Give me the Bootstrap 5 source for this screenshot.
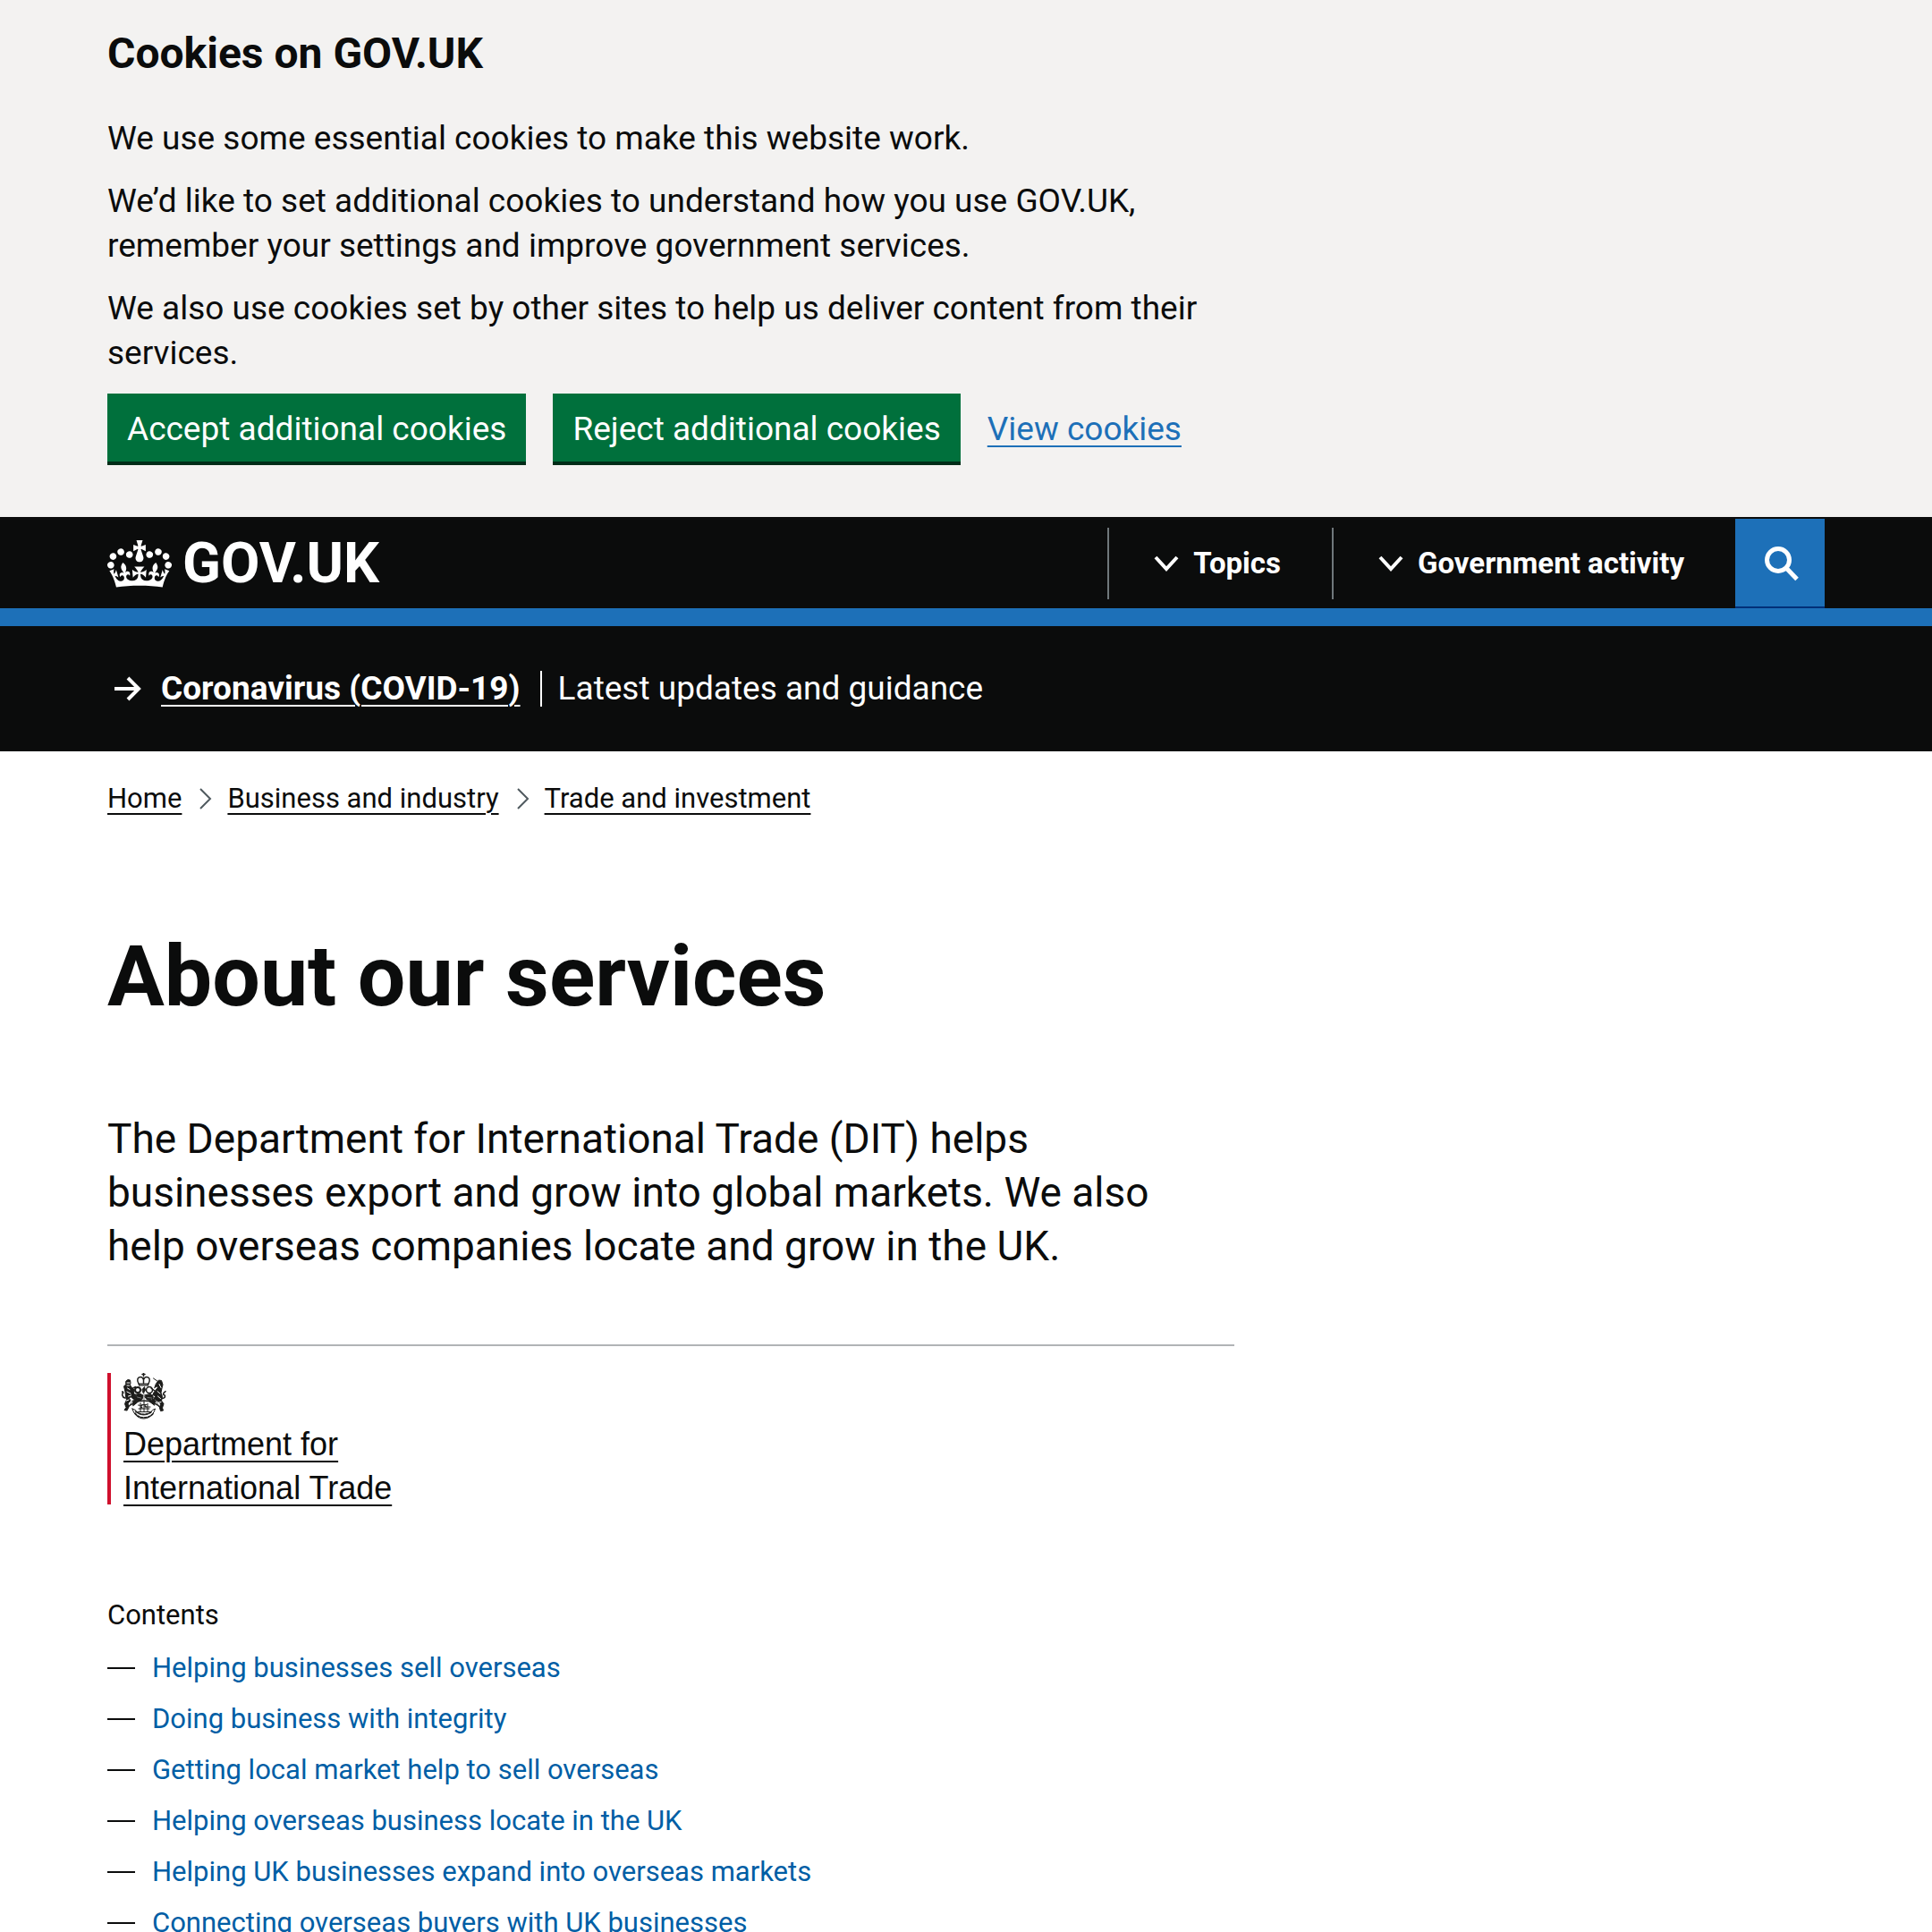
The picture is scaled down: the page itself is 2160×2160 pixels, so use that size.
<!DOCTYPE html>
<html lang="en">
<head>
<meta charset="utf-8">
<meta name="viewport" content="width=device-width, initial-scale=1">
<title>About our services - Department for International Trade - GOV.UK</title>
<link href="https://cdn.jsdelivr.net/npm/bootstrap@5.3.0/dist/css/bootstrap.min.css" rel="stylesheet">
<style>
  :root { --ink: #0b0c0c; --brand: #1d70b8; }
  body { font-family: Roboto, "Liberation Sans", sans-serif; font-size: 37px; line-height: 50px; color: var(--ink); background: #fff; }
  .page-width { max-width: 1920px; margin-inline: auto; }
  .two-thirds { max-width: 1260px; }
  a { text-decoration-thickness: 2px; text-underline-offset: 6px; }

  .cookie-banner { background: #f3f2f1; padding: 30px 0 58px; }
  .cookie-banner h2 { font-size: 48px; line-height: 60px; font-weight: 700; margin-bottom: 40px; }
  .cookie-banner p { margin-bottom: 20px; }
  .cookie-actions { gap: 30px; }
  .btn-gov { background: #00703c; color: #fff; font-size: 37px; line-height: 50px; border: 0; border-radius: 0; padding: 15px 22px; box-shadow: inset 0 -4px 0 #002d18; }
  .btn-gov:hover { background: #005a30; color: #fff; }
  .cookie-actions a { color: var(--brand); }

  .site-header { background: var(--ink); border-bottom: 20px solid var(--brand); padding-top: 2px; }
  .logotype { color: #fff; font-size: 63px; line-height: 70px; font-weight: 700; gap: 12px; }
  .menu-toggle { background: none; border: 0; border-left: 2px solid #6f777b; color: #fff; font-weight: 700; font-size: 33px; line-height: 40px; height: 80px; padding: 0 57px 0 50px; gap: 16px; }
  .search-toggle { background: var(--brand); border: 0; border-bottom: 2px solid #003078; width: 100px; height: 100px; padding: 2px 0 0 4px; }

  .covid-bar { background: var(--ink); color: #fff; padding: 45px 0; }
  .covid-bar a { color: #fff; font-weight: 700; padding-right: 22px; }
  .covid-bar svg { margin-left: 7px; margin-right: 21px; }
  .covid-bar span { border-left: 2px solid #fff; line-height: 40px; padding-left: 18px; }

  .crumbs { font-size: 31px; line-height: 40px; padding-top: 33px; margin-bottom: 129px; gap: 20px; }
  .crumbs li { gap: 17px; }
  .crumbs a { color: var(--ink); }
  .page-title { font-size: 95px; line-height: 100px; font-weight: 700; margin-bottom: 101px; }
  .intro { font-size: 46px; line-height: 60px; margin-bottom: 80px; }
  .org-rule { border-top: 2px solid #b1b4b6; padding-top: 30px; margin-bottom: 99px; }
  .org-mark { border-left: 4px solid #cf102d; height: 147px; padding-left: 14px; color: var(--ink); font: 36px/49px "Liberation Sans", Arial, sans-serif; }
  .org-mark svg { margin-left: -2px; margin-bottom: 3px; }
  .org-mark:hover { color: var(--ink); }

  .contents h2 { font-size: 31px; line-height: 50px; font-weight: 400; margin-bottom: 9px; }
  .contents ol { font-size: 31px; line-height: 50px; display: grid; row-gap: 7px; }
  .contents li { display: flex; align-items: center; gap: 19px; }
  .contents li::before { content: ""; width: 31px; border-top: 2px solid var(--ink); }
  .contents a { color: #005ea5; text-decoration: none; }
  .contents a:hover { text-decoration: underline; }
</style>
<script src="https://cdn.jsdelivr.net/npm/bootstrap@5.3.0/dist/js/bootstrap.bundle.min.js" defer></script>
</head>
<body>

<section class="cookie-banner" aria-label="Cookies on GOV.UK">
  <div class="page-width">
    <div class="two-thirds">
      <h2>Cookies on GOV.UK</h2>
      <p>We use some essential cookies to make this website work.</p>
      <p>We’d like to set additional cookies to understand how you use GOV.UK, remember your settings and improve government services.</p>
      <p>We also use cookies set by other sites to help us deliver content from their services.</p>
      <div class="cookie-actions d-flex flex-wrap align-items-center">
        <button type="button" class="btn btn-gov">Accept additional cookies</button>
        <button type="button" class="btn btn-gov">Reject additional cookies</button>
        <a href="#">View cookies</a>
      </div>
    </div>
  </div>
</section>

<header class="site-header">
  <div class="page-width d-flex align-items-center justify-content-between">
    <a href="#" class="logotype d-flex align-items-center text-decoration-none">
      <svg width="72" height="53" viewBox="0 0 132 97" fill="#fff" aria-hidden="true"><path d="M25 30.2c3.5 1.5 7.7-.2 9.1-3.7 1.5-3.6-.2-7.8-3.9-9.2-3.6-1.4-7.6.3-9.1 3.9-1.4 3.5.3 7.5 3.9 9zM9 39.5c3.6 1.5 7.8-.2 9.2-3.7 1.5-3.6-.2-7.8-3.9-9.1-3.6-1.5-7.6.2-9.1 3.8-1.4 3.5.3 7.5 3.8 9zM4.4 57.2c3.5 1.5 7.7-.2 9.1-3.8 1.5-3.6-.2-7.7-3.9-9.1-3.5-1.5-7.6.3-9.1 3.8-1.4 3.5.3 7.6 3.9 9.1zm38.3-21.4c3.5 1.5 7.7-.2 9.1-3.8 1.5-3.6-.2-7.7-3.9-9.1-3.6-1.5-7.6.3-9.1 3.8-1.3 3.6.4 7.7 3.9 9.1zm64.4-5.6c-3.6 1.5-7.8-.2-9.1-3.7-1.5-3.6.2-7.8 3.8-9.2 3.6-1.4 7.7.3 9.2 3.9 1.3 3.5-.4 7.5-3.9 9zm15.9 9.3c-3.6 1.5-7.7-.2-9.1-3.7-1.5-3.6.2-7.8 3.7-9.1 3.6-1.5 7.7.2 9.2 3.8 1.5 3.5-.3 7.5-3.8 9zm4.7 17.7c-3.6 1.5-7.8-.2-9.2-3.8-1.5-3.6.2-7.7 3.9-9.1 3.6-1.5 7.7.3 9.2 3.8 1.3 3.5-.4 7.6-3.9 9.1zM89.3 35.8c-3.6 1.5-7.8-.2-9.2-3.8-1.4-3.6.2-7.7 3.9-9.1 3.6-1.5 7.7.3 9.2 3.8 1.4 3.6-.3 7.7-3.9 9.1zM69.7 17.7l8.9 4.7V9.3l-8.9 2.8c-.2-.3-.5-.6-.9-.9L72.4 0H59.6l3.5 11.2c-.3.3-.6.5-.9.9l-8.8-2.8v13.1l8.8-4.7c.3.3.6.7.9.9l-5 15.4v.1c-.2.8-.4 1.6-.4 2.4 0 4.1 3.1 7.5 7 8.1h.2c.3 0 .7.1 1 .1.4 0 .7 0 1-.1h.2c4-.6 7.1-4.1 7.1-8.1 0-.8-.1-1.7-.4-2.4V34l-5.1-15.4c.4-.2.7-.6 1-.9zM66 92.8c16.9 0 32.8 1.1 47.1 3.2 4-16.9 8.9-26.7 14-33.5l-9.6-3.4c1 4.9 1.1 7.2 0 10.2-1.5-1.4-3-4.3-4.2-8.7L108.6 76c2.8-2 5-3.2 7.5-3.3-4.4 9.4-10 11.9-13.6 11.2-4.3-.8-6.3-4.6-5.6-7.9 1-4.7 5.7-5.9 8-.5 4.3-8.7-3-11.4-7.6-8.8 7.1-7.2 7.9-13.5 2.1-21.1-8 6.1-8.1 12.3-4.5 20.8-4.7-5.4-12.1-2.5-9.5 6.2 3.4-5.2 7.9-2 7.2 3.1-.6 4.3-6.4 7.8-13.5 7.2-10.3-.9-10.9-8-11.2-13.8 2.5-.5 7.1 1.8 11 7.3L80.2 60c-4.1 4.4-8 5.3-12.3 5.4 1.4-4.4 8-11.6 8-11.6H55.5s6.4 7.2 7.9 11.6c-4.2-.1-8-1-12.3-5.4l1.4 16.4c3.9-5.5 8.5-7.7 10.9-7.3-.3 5.8-.9 12.8-11.1 13.8-7.2.6-12.9-2.9-13.5-7.2-.7-5 3.8-8.3 7.1-3.1 2.7-8.7-4.6-11.6-9.4-6.2 3.7-8.5 3.6-14.7-4.6-20.8-5.8 7.6-5 13.9 2.2 21.1-4.7-2.6-11.9.1-7.7 8.8 2.3-5.5 7.1-4.2 8.1.5.7 3.3-1.3 7.1-5.7 7.9-3.5.7-9-1.8-13.5-11.2 2.5.1 4.7 1.3 7.5 3.3l-4.7-15.4c-1.2 4.4-2.7 7.2-4.3 8.7-1.1-3-.9-5.3 0-10.2l-9.5 3.4c5 6.9 9.9 16.7 14 33.5 14.8-2.1 30.8-3.2 47.7-3.2z"/></svg>
      GOV.UK
    </a>
    <nav class="d-flex align-items-center" aria-label="Menu">
      <button type="button" class="menu-toggle d-flex align-items-center">
        <svg width="28" height="18" viewBox="0 0 28 18" fill="none" stroke="#fff" stroke-width="4" aria-hidden="true"><path d="M2 2l12 13L26 2"/></svg>
        Topics
      </button>
      <button type="button" class="menu-toggle d-flex align-items-center">
        <svg width="28" height="18" viewBox="0 0 28 18" fill="none" stroke="#fff" stroke-width="4" aria-hidden="true"><path d="M2 2l12 13L26 2"/></svg>
        Government activity
      </button>
      <button type="button" class="search-toggle d-flex align-items-center justify-content-center" aria-label="Search GOV.UK">
        <svg width="38" height="40" viewBox="0 0 38 40" fill="none" stroke="#fff" aria-hidden="true"><circle cx="15" cy="16" r="12.500" stroke-width="5"/><path d="M24 25l12 12.500" stroke-width="5"/></svg>
      </button>
    </nav>
  </div>
</header>

<aside class="covid-bar">
  <div class="page-width d-flex align-items-center">
    <svg width="32" height="28" viewBox="0 0 32 28" fill="none" stroke="#fff" stroke-width="4" aria-hidden="true"><path d="M1 14h27M16 2l12 12-12 12"/></svg>
    <a href="#">Coronavirus (COVID-19)</a>
    <span>Latest updates and guidance</span>
  </div>
</aside>

<main class="page-width">
  <nav aria-label="Breadcrumb">
    <ol class="crumbs list-unstyled d-flex flex-wrap align-items-center">
      <li><a href="#">Home</a></li>
      <li class="d-flex align-items-center"><svg width="14" height="24" viewBox="0 0 14 24" fill="none" stroke="#505a5f" stroke-width="2" aria-hidden="true"><path d="M1 1l11 11L1 23"/></svg><a href="#">Business and industry</a></li>
      <li class="d-flex align-items-center"><svg width="14" height="24" viewBox="0 0 14 24" fill="none" stroke="#505a5f" stroke-width="2" aria-hidden="true"><path d="M1 1l11 11L1 23"/></svg><a href="#">Trade and investment</a></li>
    </ol>
  </nav>

  <div class="two-thirds">
    <h1 class="page-title">About our services</h1>
    <p class="intro">The Department for International Trade (DIT) helps businesses export and grow into global markets. We also help overseas companies locate and grow in the UK.</p>

    <div class="org-rule d-flex">
      <a href="#" class="org-mark">
        <svg class="d-block" width="50" height="52" viewBox="0 0 100 104" fill="#1d1d1b" stroke="#1d1d1b" stroke-linejoin="round" stroke-linecap="round" aria-hidden="true">
          <!-- crown -->
          <path d="M49 0v7M46 3h6" stroke-width="3"/>
          <path d="M38 24c-5-9-2-15 4-15 4 0 6 3 7 6 1-3 3-6 7-6 6 0 9 6 4 15M49 11v12" fill="none" stroke-width="3"/>
          <path d="M37 23h24l-1 6H38z" stroke="none"/>
          <path d="M41 26h16" stroke="#fff" stroke-width="1"/>
          <!-- lion -->
          <path d="M10 18l4-3 5 1 1 6-1 5 4 6 5 5-1 9 5 6-3 7-8-6-5 1 4 7-6 6 2 8-4 8-6-1 4-6-3-8 4-9-2-8-1-10-3-12 4-4z" stroke-width="2"/>
          <path d="M8 56C0 54 0 46 4 44M3 42H0M22 36l9-5M22 46l10 3" fill="none" stroke-width="3"/>
          <path d="M12 22h6M12 28h5M13 34l5 3M12 42l8 4M15 52l6-2M11 62l5-2" fill="none" stroke="#fff" stroke-width="2"/>
          <!-- unicorn -->
          <path d="M71 12l10 7" stroke-width="2"/>
          <path d="M77 24l6-8 6 1 3 9-2 8-2 10 3 9-2 9 5 7-3 9 2 6-6 1-2-7 2-9-8-7-7 6-4-6 7-9-5-7 5-6 7-9-4-1-4 3z" stroke-width="2"/>
          <path d="M91 57c8-1 7-8 2-9 0-6 5-5 5-7M74 40l-8-6M72 49l-9 2" fill="none" stroke-width="3"/>
          <path d="M84 25l4 8M80 41l6 5M81 52l6 5M83 66l5-1" fill="none" stroke="#fff" stroke-width="2"/>
          <!-- shield -->
          <circle cx="36" cy="38" r="6" fill="none" stroke-width="4"/>
          <circle cx="62" cy="38" r="7" fill="none" stroke-width="3"/>
          <path d="M46 37l5-6 2 7-4 7zM33 48l8-2 7 4-2 9-9 5-6-5zM53 49l12-2 6 7-4 7-10-1-5-6zM26 62l6-3 3 7-9 7zM72 61l-5-3-6 5 12 9z" stroke-width="2"/>
          <path d="M35 54l8 2M58 55l9 1M50 46v20M25 60l-8 14M75 60l9 15" fill="none" stroke="#777" stroke-width="2"/>
          <path d="M10 80c12-13 24-18 40-18s28 5 39 18" fill="none" stroke-width="3"/>
          <!-- compartment with ship and motto -->
          <path d="M42 67v19M50 65v22M58 68v18M37 72l9 1M45 71h11M54 76h10M38 80h24M36 87h30" fill="none" stroke-width="2"/>
          <path d="M43 72l5 7h-6zM51 70l6 7h-6z" stroke="none"/>
          <path d="M24 80l7 3c6 14 29 15 38 0l6-3c-3 10-10 21-25 22-14 0-23-10-26-22z" fill="none" stroke-width="2"/>
          <path d="M30 90c9 13 31 13 41 0M31 86c10 8 27 9 37 0" fill="none" stroke-width="3" stroke-dasharray="5 3"/>
        </svg>
        Department for<br>International Trade
      </a>
    </div>

    <nav class="contents" aria-labelledby="contents-title">
      <h2 id="contents-title">Contents</h2>
      <ol class="list-unstyled">
        <li><a href="#">Helping businesses sell overseas</a></li>
        <li><a href="#">Doing business with integrity</a></li>
        <li><a href="#">Getting local market help to sell overseas</a></li>
        <li><a href="#">Helping overseas business locate in the UK</a></li>
        <li><a href="#">Helping UK businesses expand into overseas markets</a></li>
        <li><a href="#">Connecting overseas buyers with UK businesses</a></li>
      </ol>
    </nav>
  </div>
</main>
</body>
</html>
